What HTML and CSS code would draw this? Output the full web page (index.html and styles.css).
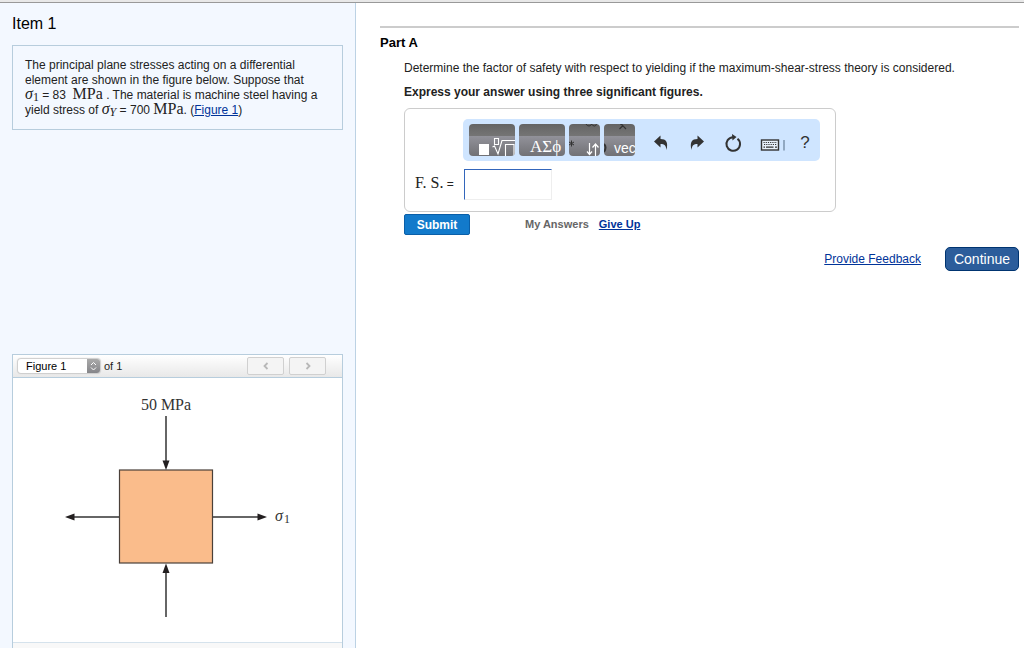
FILE: index.html
```html
<!DOCTYPE html>
<html lang="en">
<head>
    <meta charset="UTF-8">
    <meta name="viewport" content="width=device-width, initial-scale=1.0">
    <title>Item 1</title>
    <link rel="stylesheet" href="styles.css">
</head>
<body>
    <div class="topbar"></div>
    <div class="page">
        <aside class="sidebar">
            <h1>Item 1</h1>
            <p class="problem">The principal plane stresses acting on a differential<br>
                element are shown in the figure below. Suppose that<br>
                <span class="math"><i>σ</i><sub>1</sub></span> = 83 &nbsp;<span class="math">MPa</span> . The material is machine steel having a<br>
                yield stress of <span class="math"><i>σ</i><sub><i>Y</i></sub></span> = 700 <span class="math">MPa</span>. (<a href="#figure">Figure 1</a>)</p>

            <section class="figure" id="figure">
                <div class="figure-bar">
                    <div class="picker">
                        <select id="figure-select" aria-label="Figure">
                            <option>Figure 1</option>
                        </select>
                        <svg class="picker-arrows" width="13" height="14" viewBox="0 0 13 14">
                            <path d="M4 6 L6.500 3.500 L9 6 M4 8.500 L6.500 11 L9 8.500" fill="none" stroke="#fff"/>
                        </svg>
                    </div>
                    <label for="figure-select">of 1</label>
                    <div class="pager">
                        <button type="button" aria-label="Previous figure">
                            <svg width="8" height="8" viewBox="0 0 8 8"><path d="M5.500 1 L2.500 4 L5.500 7" fill="none" stroke="#b8b8b8" stroke-width="1.800"/></svg>
                        </button>
                        <button type="button" aria-label="Next figure">
                            <svg width="8" height="8" viewBox="0 0 8 8"><path d="M2.500 1 L5.500 4 L2.500 7" fill="none" stroke="#b8b8b8" stroke-width="1.800"/></svg>
                        </button>
                    </div>
                </div>
                <div class="figure-view">
                    <svg class="diagram" width="329" height="264" viewBox="13 378 329 264">
                        <rect x="119.500" y="470" width="93" height="93" fill="#fabc8b" stroke="#4a4039" stroke-width="1.200"/>
                        <g stroke="#333" stroke-width="1.500">
                            <path d="M166 416 V464"/>
                            <path d="M166 617 V570"/>
                            <path d="M119 517 H72"/>
                            <path d="M213 517 H260"/>
                        </g>
                        <g fill="#231f20">
                            <path d="M162.500 460.500 H169.500 L166 470 Z"/>
                            <path d="M162.500 573 H169.500 L166 563.500 Z"/>
                            <path d="M74.500 513.500 V520.500 L65 517 Z"/>
                            <path d="M257.500 513.500 V520.500 L267 517 Z"/>
                        </g>
                        <text x="166" y="410" text-anchor="middle" class="diagram-text">50 MPa</text>
                        <text x="275" y="521" class="diagram-text"><tspan font-style="italic">σ</tspan><tspan class="diagram-sub" dx="1" dy="2">1</tspan></text>
                    </svg>
                </div>
                <div class="figure-foot"></div>
            </section>
        </aside>

        <main class="content">
            <h2>Part A</h2>
            <form class="part">
                <p>Determine the factor of safety with respect to yielding if the maximum-shear-stress theory is considered.</p>
                <p class="hint">Express your answer using three significant figures.</p>
                <div class="answer">
                    <div class="toolbar">
                        <div class="tools">
                            <button type="button" class="tool" aria-label="Templates">
                                <svg width="46" height="32" viewBox="0 0 46 32">
                                    <rect x="10" y="20" width="10" height="11" fill="#fff"/>
                                    <path d="M25.500 14.500 h4 v6 h-4 z M23.500 23 l2 -1 l3.500 8 l4 -13.500 H46 M36.500 32 V20.500 h8.500 V32" fill="none" stroke="#fff" stroke-width="1.100"/>
                                </svg>
                            </button>
                            <button type="button" class="tool" aria-label="Symbols">
                                <svg width="46" height="32" viewBox="0 0 46 32">
                                    <text x="11" y="28" class="tool-greek">ΑΣϕ</text>
                                </svg>
                            </button>
                            <button type="button" class="tool tool-small" aria-label="Accents">
                                <svg width="31" height="32" viewBox="0 0 31 32">
                                    <path d="M17 0 q1 2 3 2 q2 0 2.500 -2 q1 2 3 2 q1.500 0 2 -2" fill="none" stroke="#333"/>
                                    <path d="M2.500 16.500 v6 M0 18 l5 3 M0 21 l5 -3" stroke="#333"/>
                                    <path d="M20.500 19 V30 M18 27.500 l2.500 3 l2.500 -3 M26.500 32 V20 M23.500 23.500 l3 -3.500 l3 3.500" fill="none" stroke="#fff" stroke-width="1.200"/>
                                </svg>
                            </button>
                            <button type="button" class="tool tool-small" aria-label="Vectors">
                                <svg width="31" height="32" viewBox="0 0 31 32">
                                    <path d="M16 0 q2 0 3 2 l3 3 M19 1.500 L15.500 5" fill="none" stroke="#333" stroke-width="1.200"/>
                                    <path d="M0 20 q3 3 0 8" fill="none" stroke="#333" stroke-width="2"/>
                                    <text x="10" y="29" class="tool-vec">vec</text>
                                </svg>
                            </button>
                        </div>
                        <div class="icons">
                            <button type="button" class="icon" aria-label="Undo">
                                <svg width="16" height="18" viewBox="0 0 16 18"><path d="M1 7.500 L7.500 1.500 V5 C13 5 15.500 8 13.500 16 C13 11.500 11.500 10 7.500 10 V13.500 Z" fill="#333"/></svg>
                            </button>
                            <button type="button" class="icon" aria-label="Redo">
                                <svg width="16" height="18" viewBox="0 0 16 18"><path d="M15 7.500 L8.500 1.500 V5 C3 5 0.500 8 2.500 16 C3 11.500 4.500 10 8.500 10 V13.500 Z" fill="#333"/></svg>
                            </button>
                            <button type="button" class="icon" aria-label="Reset">
                                <svg width="18" height="20" viewBox="0 0 18 20"><path d="M13.500 5.700 A6.800 6.800 0 1 1 9 4.200" fill="none" stroke="#333" stroke-width="2"/><path d="M8 1 L12.500 4 L8.500 7.500 Z" fill="#333"/></svg>
                            </button>
                            <button type="button" class="icon icon-wide" aria-label="Keyboard">
                                <svg width="26" height="16" viewBox="0 0 26 16">
                                    <rect x="2.500" y="5" width="17" height="10" fill="#e8f1fb" stroke="#333" stroke-width="1.400"/>
                                    <path d="M4.500 7.500 H18 M5 9.500 H17.500" stroke="#333" stroke-width="1.200" stroke-dasharray="1.200 1"/>
                                    <path d="M4.500 12.200 H6 M7 12.200 H14.500 M16 12.200 H18" stroke="#333" stroke-width="1.300"/>
                                    <path d="M25 5 V15.500" stroke="#7d93ad" stroke-width="1.500"/>
                                </svg>
                            </button>
                            <button type="button" class="icon icon-help">?</button>
                        </div>
                    </div>
                    <div class="entry">
                        <label for="fs"><span class="math">F. S.</span> =</label>
                        <input type="text" id="fs">
                    </div>
                </div>
                <div class="actions">
                    <button type="submit" class="submit">Submit</button>
                    <span class="my-answers">My Answers</span>
                    <a href="#">Give Up</a>
                </div>
            </form>
            <div class="footer">
                <a href="#">Provide Feedback</a>
                <button type="button" class="continue">Continue</button>
            </div>
        </main>
    </div>
</body>
</html>
```

FILE: styles.css
```css
* {
    box-sizing: border-box;
}
body {
    margin: 0;
    min-height: 100vh;
    display: flex;
    flex-direction: column;
    font-family: "Liberation Sans", Arial, sans-serif;
    font-size: 12px;
    line-height: 15px;
    color: #222;
    background-color: #fff;
}
h1, h2, p {
    margin: 0;
}
button {
    font-family: inherit;
    padding: 0;
    cursor: pointer;
}
svg {
    display: block;
}
a {
    color: #039;
}
.topbar {
    height: 3px;
    background-color: #e8e8e8;
    border-bottom: 1px solid #999;
}
.page {
    flex: 1;
    display: flex;
}

/* left column */
.sidebar {
    width: 356px;
    flex-shrink: 0;
    display: flex;
    flex-direction: column;
    padding: 11px 12px 0;
    background-color: #f3f8ff;
    border-right: 1px solid #bcd2e4;
}
h1 {
    font-size: 16px;
    line-height: 20px;
    font-weight: normal;
    color: #000;
    margin-bottom: 11px;
}
.problem {
    padding: 12px 12px 11px;
    border: 1px solid #b7cddd;
    white-space: nowrap;
}
.math {
    font-family: "Liberation Serif", "Times New Roman", serif;
    font-size: 16px;
    line-height: 1px;
}
.math sub {
    font-size: 12px;
    line-height: 1px;
    vertical-align: -2px;
}
.figure {
    margin-top: auto;
    border: 1px solid #b7cddd;
    border-bottom: none;
    background-color: #fff;
}
.figure-bar {
    display: flex;
    align-items: center;
    gap: 4px;
    height: 23px;
    padding: 0 16px 0 5px;
    background: linear-gradient(#fff, #e8e8e8);
    border-bottom: 1px solid #b7cddd;
}
.picker {
    position: relative;
}
.picker select {
    display: block;
    appearance: none;
    width: 82px;
    height: 14px;
    padding: 0 8px;
    border: none;
    border-radius: 3px;
    box-shadow: 0 0 1px 1px #ccc;
    background-color: #fff;
    color: #000;
    font-family: inherit;
    font-size: 11px;
    line-height: 14px;
}
.picker-arrows {
    position: absolute;
    top: 0;
    right: 0;
    border-radius: 0 3px 3px 0;
    background: linear-gradient(#aaa, #858589);
    pointer-events: none;
}
.figure-bar label {
    font-size: 11px;
}
.pager {
    display: flex;
    gap: 5px;
    margin-left: auto;
}
.pager button {
    display: flex;
    align-items: center;
    justify-content: center;
    width: 37px;
    height: 18px;
    border: 1px solid #d0d0d0;
    border-radius: 2px;
    background-color: #f4f4f4;
}
.diagram-text {
    font-family: "Liberation Serif", "Times New Roman", serif;
    font-size: 16px;
    fill: #333;
}
.diagram-sub {
    font-size: 12px;
}
.figure-foot {
    height: 6px;
    border-top: 1px solid #d5e2ec;
    background-color: #f8f8f8;
}

/* right column */
.content {
    flex: 1;
    padding: 23px 5px 0 24px;
}
h2 {
    padding-top: 7px;
    border-top: 2px solid #ccc;
    font-size: 13px;
    line-height: 16px;
    color: #000;
}
.part {
    padding: 10px 0 0 24px;
}
.hint {
    margin-top: 9px;
    font-weight: bold;
}
.answer {
    max-width: 432px;
    margin-top: 8px;
    padding: 10px 15px 11px 10px;
    border: 1px solid #ccc;
    border-radius: 6px;
}
.toolbar {
    display: flex;
    align-items: center;
    gap: 8px;
    height: 42px;
    margin-left: 48px;
    padding-left: 6px;
    border-radius: 5px;
    background-color: #cfe5ff;
}
.tools {
    display: flex;
    gap: 4px;
}
.tool {
    width: 46px;
    height: 32px;
    border: none;
    border-radius: 4px;
    overflow: hidden;
    background: linear-gradient(#646464, #757575 12px, #92929a 12px, #717175);
}
.tool-small {
    width: 31px;
}
.tool-greek {
    font-family: "Liberation Serif", "Times New Roman", serif;
    font-size: 17px;
    fill: #fff;
}
.tool-vec {
    font-family: "Liberation Sans", Arial, sans-serif;
    font-size: 14px;
    fill: #fff;
}
.icons {
    display: flex;
    padding-top: 6px;
}
.icon {
    display: flex;
    align-items: center;
    justify-content: center;
    width: 36px;
    height: 32px;
    border: none;
    background: none;
    color: #333;
}
.icon-wide {
    width: 42px;
}
.icon-help {
    width: 24px;
    font-size: 17px;
}
.entry {
    display: flex;
    align-items: center;
    margin-top: 8px;
}
.entry label {
    width: 49px;
    white-space: nowrap;
}
.entry input {
    width: 88px;
    height: 31px;
    padding: 0 4px;
    border: 1px solid #eee;
    border-top-color: #36b;
    border-left-color: #36b;
}
.actions {
    display: flex;
    align-items: center;
    margin-top: 2px;
    font-size: 11px;
    font-weight: bold;
}
.submit {
    width: 66px;
    height: 21px;
    border: 1px solid #0a5fa8;
    border-radius: 2px;
    background-color: #127acb;
    color: #fff;
    font-size: 12px;
    font-weight: bold;
}
.my-answers {
    margin: 0 10px 0 55px;
    color: #666;
}
.footer {
    display: flex;
    align-items: center;
    justify-content: flex-end;
    gap: 24px;
    margin-top: 12px;
}
.continue {
    width: 74px;
    height: 24px;
    border: 1px solid #003470;
    border-radius: 5px;
    background-color: #2c5d9b;
    color: #fff;
    font-size: 14px;
}
```
